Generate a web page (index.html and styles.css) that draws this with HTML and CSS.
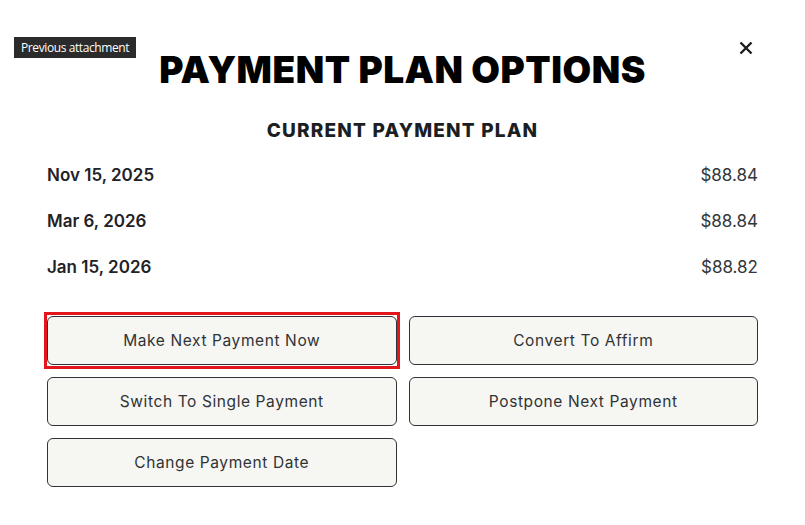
FILE: index.html
```html
<!DOCTYPE html>
<html lang="en">
<head>
<meta charset="utf-8">
<title>Payment Plan Options</title>
<link rel="stylesheet" href="styles.css">
</head>
<body>
<div class="modal">
  <div class="tooltip">Previous attachment</div>
  <button class="close" aria-label="Close">
    <svg width="14" height="14" viewBox="0 0 14 14"><path d="M1.5 1.5 L12.5 12.5 M12.5 1.5 L1.5 12.5" stroke="#1c1c1c" stroke-width="2.4" fill="none"/></svg>
  </button>
  <h1 class="title">PAYMENT PLAN OPTIONS</h1>
  <h2 class="subtitle">CURRENT PAYMENT PLAN</h2>
  <div class="plan">
    <div class="row"><span class="date">Nov 15, 2025</span><span class="amount">$88.84</span></div>
    <div class="row"><span class="date">Mar 6, 2026</span><span class="amount">$88.84</span></div>
    <div class="row"><span class="date">Jan 15, 2026</span><span class="amount">$88.82</span></div>
  </div>
  <div class="actions">
    <button class="btn btn-focus">Make Next Payment Now</button>
    <button class="btn">Convert To Affirm</button>
    <button class="btn">Switch To Single Payment</button>
    <button class="btn">Postpone Next Payment</button>
    <button class="btn">Change Payment Date</button>
  </div>
</div>
</body>
</html>
```
FILE: styles.css
```css
html, body {
  margin: 0;
  padding: 0;
  background: #ffffff;
}
body {
  font-family: "Inter", "Noto Sans", sans-serif;
  color: #25282c;
}
.modal {
  position: relative;
  width: 805px;
  height: 525px;
  box-sizing: border-box;
  padding: 47px 47px 0;
  overflow: hidden;
}
.tooltip {
  position: absolute;
  left: 14px;
  top: 37px;
  height: 21px;
  padding: 0 7px;
  background: #2b2b2b;
  color: #ffffff;
  font-family: "Open Sans", "Noto Sans", sans-serif;
  font-size: 12px;
  letter-spacing: -0.4px;
  line-height: 21px;
  z-index: 2;
}
.close {
  position: absolute;
  left: 737px;
  top: 39px;
  width: 18px;
  height: 18px;
  padding: 2px;
  border: 0;
  background: none;
  display: flex;
  align-items: center;
  justify-content: center;
}
.title {
  margin: 0;
  font-size: 37px;
  line-height: 46px;
  font-weight: 900;
  text-align: center;
  color: #000000;
  letter-spacing: 0.5px;
}
.subtitle {
  margin: 26px 0 0;
  font-size: 19px;
  line-height: 24px;
  font-weight: 800;
  text-align: center;
  color: #1b1e23;
  letter-spacing: 1.2px;
}
.plan {
  margin-top: 9px;
  display: flex;
  flex-direction: column;
}
.row {
  height: 46px;
  display: flex;
  align-items: center;
  justify-content: space-between;
  font-size: 17px;
}
.date {
  font-weight: 600;
  color: #1f2226;
}
.amount {
  font-weight: 400;
  color: #33363a;
}
.actions {
  margin-top: 26px;
  display: grid;
  grid-template-columns: 1fr 1fr;
  column-gap: 12px;
  row-gap: 12px;
}
.btn {
  position: relative;
  height: 49px;
  border: 1px solid #2f3236;
  border-radius: 6px;
  background: #f6f6f3;
  font-family: inherit;
  font-size: 15.5px;
  letter-spacing: 0.6px;
  color: #303336;
  cursor: pointer;
}
.btn-focus::after {
  content: "";
  position: absolute;
  top: -5px;
  bottom: -5px;
  left: -4px;
  right: -4px;
  border: 3px solid #e3161c;
  pointer-events: none;
}
```
